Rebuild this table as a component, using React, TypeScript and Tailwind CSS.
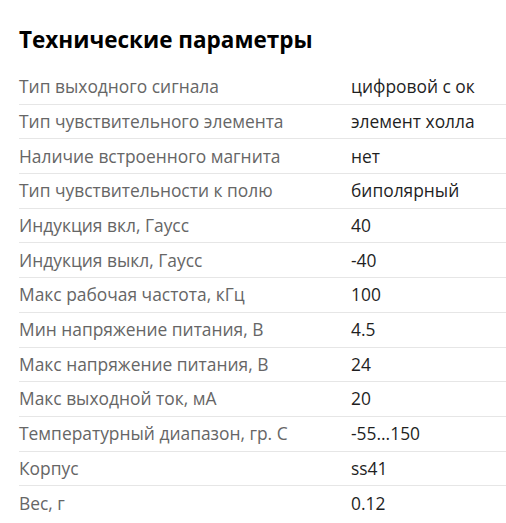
const specs: [string, string][] = [
  ["Тип выходного сигнала", "цифровой с ок"],
  ["Тип чувствительного элемента", "элемент холла"],
  ["Наличие встроенного магнита", "нет"],
  ["Тип чувствительности к полю", "биполярный"],
  ["Индукция вкл, Гаусс", "40"],
  ["Индукция выкл, Гаусс", "-40"],
  ["Макс рабочая частота, кГц", "100"],
  ["Мин напряжение питания, В", "4.5"],
  ["Макс напряжение питания, В", "24"],
  ["Макс выходной ток, мА", "20"],
  ["Температурный диапазон, гр. С", "-55...150"],
  ["Корпус", "ss41"],
  ["Вес, г", "0.12"],
];

export default function App() {
  return (
    <div
      className="min-h-screen bg-white pl-[19px] pt-[23px]"
      style={{ fontFamily: '"Open Sans", "Liberation Sans", sans-serif' }}
    >
      <h2 className="text-[22.5px] font-bold leading-[33px] text-black">
        Технические параметры
      </h2>
      <div className="mt-[14px]">
        {specs.map(([label, value], i) => (
          <div
            key={label}
            className={`flex pt-[4.25px] pb-[5.45px] text-[17.4px] leading-6 ${
              i < specs.length - 1 ? "border-b border-[#e6e6e6]" : ""
            }`}
          >
            <div className="w-[332px] shrink-0 text-[#666666]">{label}</div>
            <div className="text-[#1f1f1f]">{value}</div>
          </div>
        ))}
      </div>
    </div>
  );
}
